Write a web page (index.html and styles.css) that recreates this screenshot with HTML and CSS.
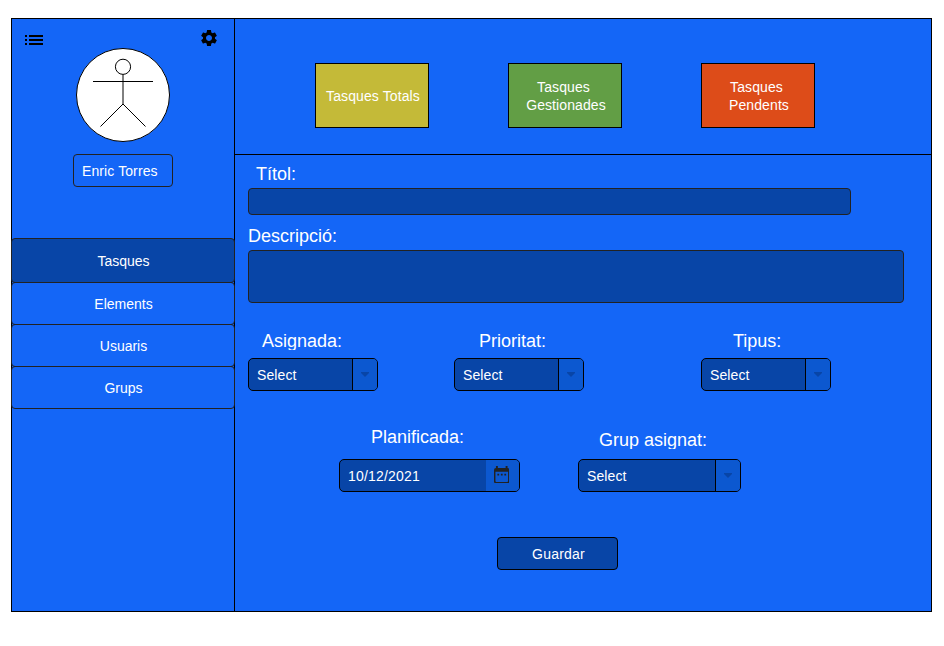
FILE: index.html
```html
<!DOCTYPE html>
<html lang="ca">
<head>
<meta charset="utf-8">
<title>Tasques</title>
<link rel="stylesheet" href="styles.css">
</head>
<body>
<div class="app">
  <aside class="sidebar">
    <div class="tools">
      <svg class="list-icon" viewBox="0 0 24 24"><path d="M3 13h2v-2H3v2zm0 4h2v-2H3v2zm0-8h2V7H3v2zm4 4h14v-2H7v2zm0 4h14v-2H7v2zM7 7v2h14V7H7z"/></svg>
      <svg class="gear-icon" viewBox="0 0 24 24"><path d="M19.14 12.94c.04-.3.06-.61.06-.94 0-.32-.02-.64-.07-.94l2.03-1.58c.18-.14.23-.41.12-.61l-1.92-3.32c-.12-.22-.37-.29-.59-.22l-2.39.96c-.5-.38-1.03-.7-1.62-.94l-.36-2.54c-.04-.24-.24-.41-.48-.41h-3.84c-.24 0-.43.17-.47.41l-.36 2.54c-.59.24-1.13.57-1.62.94l-2.39-.96c-.22-.08-.47 0-.59.22L2.74 8.87c-.12.21-.08.47.12.61l2.03 1.58c-.05.3-.09.63-.09.94s.02.64.07.94l-2.03 1.58c-.18.14-.23.41-.12.61l1.92 3.32c.12.22.37.29.59.22l2.39-.96c.5.38 1.03.7 1.62.94l.36 2.54c.05.24.24.41.48.41h3.84c.24 0 .44-.17.47-.41l.36-2.54c.59-.24 1.13-.56 1.62-.94l2.39.96c.22.08.47 0 .59-.22l1.92-3.32c.12-.22.07-.47-.12-.61l-2.01-1.58zM12 15.6c-1.98 0-3.6-1.62-3.6-3.6s1.62-3.6 3.6-3.6 3.6 1.62 3.6 3.6-1.62 3.6-3.6 3.6z"/></svg>
    </div>
    <svg class="avatar" viewBox="0 0 94 94">
      <circle cx="47" cy="47" r="46.5" fill="#fff" stroke="#000"/>
      <g fill="none" stroke="#000">
        <circle cx="47" cy="18.8" r="7.6"/>
        <path d="M47 26.5V56M17 33.500H77M24.500 78.500L47 56L69.500 78.500"/>
      </g>
    </svg>
    <div class="user-name">Enric Torres</div>
    <nav class="menu">
      <a class="menu-item active">Tasques</a>
      <a class="menu-item">Elements</a>
      <a class="menu-item">Usuaris</a>
      <a class="menu-item">Grups</a>
    </nav>
  </aside>
  <main class="main">
    <header class="stats">
      <div class="stat total">Tasques Totals</div>
      <div class="stat done"><span>Tasques</span><span class="second">Gestionades</span></div>
      <div class="stat pending"><span>Tasques</span><span class="second">Pendents</span></div>
    </header>
    <form class="form">
      <label class="label title-label">Títol:</label>
      <div class="input title-input"></div>
      <label class="label desc-label">Descripció:</label>
      <div class="input desc-input"></div>
      <div class="row selects">
        <div class="field assigned">
          <label class="label">Asignada:</label>
          <div class="select"><span class="value">Select</span><span class="arrow"><svg viewBox="0 0 8 5"><path d="M0 0H8V1L4 5L0 1Z"/></svg></span></div>
        </div>
        <div class="field priority">
          <label class="label">Prioritat:</label>
          <div class="select"><span class="value">Select</span><span class="arrow"><svg viewBox="0 0 8 5"><path d="M0 0H8V1L4 5L0 1Z"/></svg></span></div>
        </div>
        <div class="field type">
          <label class="label">Tipus:</label>
          <div class="select"><span class="value">Select</span><span class="arrow"><svg viewBox="0 0 8 5"><path d="M0 0H8V1L4 5L0 1Z"/></svg></span></div>
        </div>
      </div>
      <div class="row planning">
        <div class="field planned">
          <label class="label">Planificada:</label>
          <div class="select"><span class="value date">10/12/2021</span><span class="calendar"><svg viewBox="0 0 16 18"><path fill-rule="evenodd" d="M2 0H4V2H12V0H14V2Q16 2 16 4V16Q16 18 14 18H2Q0 18 0 16V4Q0 2 2 2ZM1.500 6V15.500Q1.500 16.500 2.500 16.500H13.500Q14.500 16.500 14.500 15.500V6Z"/><path d="M3.500 8H5.300V9.800H3.500ZM7.100 8H8.900V9.800H7.100ZM10.700 8H12.500V9.800H10.700Z"/></svg></span></div>
        </div>
        <div class="field group">
          <label class="label">Grup asignat:</label>
          <div class="select"><span class="value">Select</span><span class="arrow"><svg viewBox="0 0 8 5"><path d="M0 0H8V1L4 5L0 1Z"/></svg></span></div>
        </div>
      </div>
      <button class="save" type="button">Guardar</button>
    </form>
  </main>
</div>
</body>
</html>
```
FILE: styles.css
```css
* { box-sizing: border-box; }

body {
  margin: 0;
  padding: 18px 0 0 11px;
  background: #fff;
  color: #fff;
  font: 14px/18px "Liberation Sans", Arial, sans-serif;
  letter-spacing: 0.1px;
}

svg { display: block; flex: none; }

.app {
  display: flex;
  width: 921px;
  height: 594px;
  border: 1px solid #000;
  background: #1466f7;
}

.sidebar {
  display: flex;
  flex-direction: column;
  align-items: center;
  flex: none;
  width: 223px;
  border-right: 1px solid #000;
}

.tools {
  display: flex;
  justify-content: space-between;
  align-self: stretch;
  height: 29px;
  padding: 9px 15.5px 0 10px;
}
.list-icon { width: 24px; height: 24px; }
.gear-icon { width: 20px; height: 20px; margin-top: 0.3px; }
.avatar { width: 94px; height: 94px; }

.user-name {
  width: 100px;
  height: 33px;
  margin-top: 12px;
  padding: 7px 8px;
  border: 1px solid #222;
  border-radius: 4px;
}

.menu { align-self: stretch; margin: 51px -1px 0; letter-spacing: 0; }
.menu-item {
  display: flex;
  align-items: center;
  justify-content: center;
  height: 43px;
  margin-bottom: -1px;
  padding-left: 1px;
  border: 1px solid #222;
  border-radius: 4px;
}
.menu-item.active { height: 45px; background: #0845a7; }

.main { flex: 1; }

.stats {
  display: flex;
  gap: 79px;
  height: 136px;
  padding: 44px 0 0 80px;
  border-bottom: 1px solid #000;
}
.stat {
  display: flex;
  flex-direction: column;
  align-items: center;
  justify-content: center;
  width: 114px;
  height: 65px;
  border: 1px solid #000;
}
.total { background: #c4ba38; padding-left: 2px; }
.done { background: #629e45; }
.pending { background: #dd4c19; }
.done span, .pending span { padding-right: 3px; }
.stat .second { padding: 0 0 0 2px; }

.form { padding-left: 13px; }
.label {
  display: block;
  height: 20px;
  overflow: hidden;
  font-size: 18px;
  line-height: 22px;
  letter-spacing: 0;
  white-space: nowrap;
}
.title-label { margin-top: 8px; padding-left: 8px; }
.desc-label { height: 24px; margin-top: 10px; }

.input {
  border: 1px solid #222;
  border-radius: 4px;
  background: #0845a7;
}
.title-input { width: 603px; height: 27px; margin-top: 5px; }
.desc-input { width: 656px; height: 53px; margin-top: 1px; }

.row { display: flex; }
.selects { margin-top: 27px; }
.planning { margin: 35px 0 0 91px; }
.field { width: 130px; }
.selects .label { margin-bottom: 8px; }
.assigned .label { padding-left: 14px; }
.priority { margin-left: 76px; }
.priority .label { padding-left: 25px; }
.type { margin-left: 117px; }
.type .label { padding-left: 32px; height: 24px; margin-bottom: 4px; }
.planned { width: 181px; }
.planned .label { padding-left: 32px; margin-bottom: 13px; }
.group { width: 163px; margin-left: 58px; }
.group .label { margin: 3px 0 10px; padding-left: 21px; }

.select {
  display: flex;
  height: 33px;
  border: 1px solid #000;
  border-radius: 5px;
  overflow: hidden;
  background: #0845a7;
}
.value { flex: 1; padding: 7px 8px; }
.date { letter-spacing: 0.2px; }
.arrow, .calendar {
  display: flex;
  align-items: center;
  justify-content: center;
  width: 25px;
  border-left: 1px solid #000;
  background: #0c58d0;
}
.arrow svg { width: 8px; height: 5px; fill: #0845a7; }
.calendar { width: 33px; border: 0; padding: 0 2px 2px 0; }
.calendar svg { width: 15.5px; height: 17.5px; fill: #222; }

.save {
  display: block;
  width: 121px;
  height: 33px;
  margin: 45px 0 0 249px;
  padding: 0 0 0 2px;
  border: 1px solid #000;
  border-radius: 4px;
  background: #0845a7;
  color: inherit;
  font: inherit;
  letter-spacing: 0.2px;
}
```
